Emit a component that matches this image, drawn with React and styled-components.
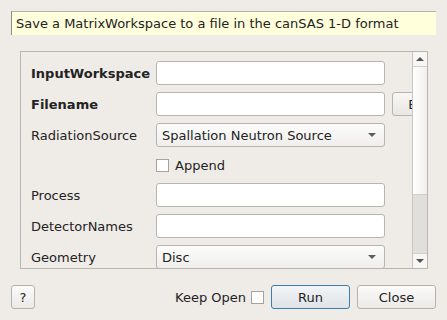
import React from 'react';
import styled, { createGlobalStyle } from 'styled-components';

const GlobalStyle = createGlobalStyle`
  html, body { margin: 0; padding: 0; background: #efebe7; }
  body { font-family: "DejaVu Sans", "Liberation Sans", sans-serif; font-size: 13px; color: #232323; }
`;

const Dialog = styled.div`
  width: 447px;
  height: 320px;
  box-sizing: border-box;
  padding: 11px 11px 0 11px;
  background: #efebe7;
  display: flex;
  flex-direction: column;
  overflow: hidden;
`;

const Tip = styled.div`
  height: 24px;
  box-sizing: border-box;
  background: #ffffdc;
  border-top: 1px solid #b4b2ae;
  border-left: 1px solid #8e8c88;
  padding-left: 4px;
  display: flex;
  align-items: center;
  white-space: nowrap;
`;

const Frame = styled.div`
  margin: 16px 8px 0 9px;
  height: 218px;
  box-sizing: border-box;
  border: 1px solid #b9b6b1;
  display: flex;
`;

const Viewport = styled.div`
  flex: 1;
  min-width: 0;
  overflow: hidden;
  padding: 9px 0 0 10px;
  display: flex;
  flex-direction: column;
  gap: 7px;
`;

const Row = styled.div`
  display: flex;
  align-items: center;
  height: ${p => p.$h || 24}px;
  flex-shrink: 0;
  & > * { flex-shrink: 0; }
`;

const Label = styled.div`
  width: 125px;
  font-weight: ${p => (p.$bold ? 'bold' : 'normal')};
  white-space: nowrap;
`;

const Input = styled.div`
  width: 229px;
  height: 24px;
  box-sizing: border-box;
  background: #fff;
  border: 1px solid #b8b5b0;
  border-radius: 3px;
`;

const Combo = styled.div`
  width: 229px;
  height: 24px;
  box-sizing: border-box;
  border: 1px solid #b8b5b0;
  border-radius: 3px;
  background: linear-gradient(#fcfcfc, #efeeec);
  display: flex;
  align-items: center;
  justify-content: space-between;
  padding: 0 8px 0 5px;
`;

const Arrow = styled.span`
  width: 0;
  height: 0;
  border-left: 4px solid transparent;
  border-right: 4px solid transparent;
  border-top: 4px solid #5c5c5c;
`;

const Browse = styled.div`
  margin-left: 7px;
  width: 80px;
  height: 24px;
  box-sizing: border-box;
  border: 1px solid #b8b5b0;
  border-radius: 3px;
  background: linear-gradient(#f8f7f6, #e9e7e4);
  display: flex;
  align-items: center;
  justify-content: center;
`;

const Check = styled.span`
  width: 13px;
  height: 13px;
  box-sizing: border-box;
  background: #fff;
  border: 1px solid #a6a39f;
  display: inline-block;
  flex-shrink: 0;
`;

const CheckLabel = styled.span`
  margin-left: 6px;
`;

const Scrollbar = styled.div`
  width: 14px;
  flex-shrink: 0;
  border-left: 1px solid #c8c5c0;
  display: flex;
  flex-direction: column;
  background: #e1dfdc;
`;

const ScrollBtn = styled.div`
  height: 14px;
  background: #f7f6f5;
  display: flex;
  align-items: center;
  justify-content: center;
  border-${p => (p.$up ? 'bottom' : 'top')}: 1px solid #d2cfca;
  flex-shrink: 0;
`;

const ScrollArrow = styled.span`
  width: 0;
  height: 0;
  border-left: 4px solid transparent;
  border-right: 4px solid transparent;
  ${p => (p.$up ? 'border-bottom: 4px solid #555;' : 'border-top: 4px solid #555;')}
`;

const Handle = styled.div`
  height: 127px;
  background: linear-gradient(90deg, #ffffff, #f1efed);
  border-bottom: 1px solid #d2cfca;
  flex-shrink: 0;
`;

const Track = styled.div`
  flex: 1;
`;

const Footer = styled.div`
  margin-top: 16px;
  display: flex;
  align-items: center;
  height: 24px;
`;

const Button = styled.div`
  width: ${p => p.$w || 79}px;
  height: 24px;
  box-sizing: border-box;
  border: 1px solid ${p => (p.$default ? '#3e7ead' : '#b5b2ad')};
  border-radius: 3px;
  background: ${p => (p.$default ? 'linear-gradient(#f2f4f6, #dee3e8)' : 'linear-gradient(#fbfbfa, #ebe9e6)')};
  display: flex;
  align-items: center;
  justify-content: center;
  margin-left: ${p => p.$ml || 0}px;
  flex-shrink: 0;
`;

const Spacer = styled.div`
  flex: 1;
`;

const KeepOpen = styled.span`
  margin-right: 5px;
`;

const fields = [
  { label: 'InputWorkspace', bold: true, kind: 'input' },
  { label: 'Filename', bold: true, kind: 'input', browse: true },
  { label: 'RadiationSource', kind: 'combo', value: 'Spallation Neutron Source' },
  { kind: 'check', label: 'Append' },
  { label: 'Process', kind: 'input' },
  { label: 'DetectorNames', kind: 'input' },
  { label: 'Geometry', kind: 'combo', value: 'Disc' },
];

function Field({ f }) {
  if (f.kind === 'check') {
    return (
      <Row $h={22}>
        <Label />
        <Check />
        <CheckLabel>{f.label}</CheckLabel>
      </Row>
    );
  }
  return (
    <Row>
      <Label $bold={f.bold}>{f.label}</Label>
      {f.kind === 'combo' ? (
        <Combo>
          <span>{f.value}</span>
          <Arrow />
        </Combo>
      ) : (
        <Input />
      )}
      {f.browse && <Browse>Browse</Browse>}
    </Row>
  );
}

export default function App() {
  return (
    <>
      <GlobalStyle />
      <Dialog>
        <Tip>Save a MatrixWorkspace to a file in the canSAS 1-D format</Tip>
        <Frame>
          <Viewport>
            {fields.map((f, i) => (
              <Field key={i} f={f} />
            ))}
          </Viewport>
          <Scrollbar>
            <ScrollBtn $up>
              <ScrollArrow $up />
            </ScrollBtn>
            <Handle />
            <Track />
            <ScrollBtn>
              <ScrollArrow />
            </ScrollBtn>
          </Scrollbar>
        </Frame>
        <Footer>
          <Button $w={24}>?</Button>
          <Spacer />
          <KeepOpen>Keep Open</KeepOpen>
          <Check />
          <Button $default $ml={7}>Run</Button>
          <Button $ml={7}>Close</Button>
        </Footer>
      </Dialog>
    </>
  );
}
